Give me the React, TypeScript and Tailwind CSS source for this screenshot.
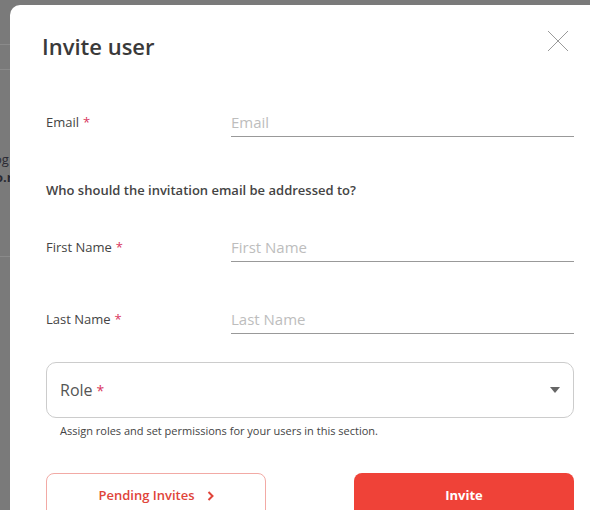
import React from "react";

function Req() {
  return <span className="ml-1 text-[#d9365e]">*</span>;
}

function Field({ label, placeholder }: { label: string; placeholder: string }) {
  return (
    <div className="flex items-center">
      <label className="w-[185px] shrink-0 text-[13px] leading-[20px] text-[#444]">
        {label}
        <Req />
      </label>
      <input
        type="text"
        placeholder={placeholder}
        className="h-[30px] flex-1 border-b border-[#999] bg-transparent text-[15px] text-[#444] placeholder-[#bdbdbd] outline-none"
      />
    </div>
  );
}

export default function App() {
  return (
    <div
      className="relative h-[510px] w-[590px] overflow-hidden bg-[#7a7a7a]"
      style={{ fontFamily: '"Open Sans", "Noto Sans", sans-serif' }}
    >
      {/* page behind the overlay */}
      <div className="flex flex-col">
        <div className="h-[45px] border-b border-[#8a8a8a]" />
        <div className="h-[25px] border-b border-[#8a8a8a]" />
        <div className="mt-[80px] -ml-[6px] text-[13px] leading-[18px] text-[#2a2a33]">og</div>
        <div className="-ml-[5px] text-[13px] font-bold leading-[18px] text-[#2a2a33]">o.r</div>
        <div className="mt-[70px] border-b border-[#8a8a8a]" />
      </div>

      {/* modal */}
      <div className="absolute left-[10px] top-[5px] w-[600px] rounded-tl-[10px] bg-white pl-[36px] pr-[36px] pt-[26px] pb-[40px]">
        <div className="flex items-start justify-between">
          <h2 className="-ml-[4px] text-[22px] font-semibold leading-[30px] text-[#3a3a3a]">Invite user</h2>
          <button className="mt-[-1px] mr-[5px] h-[22px] w-[22px]">
            <svg viewBox="0 0 22 22" width="22" height="22">
              <path d="M1 1 L21 21 M21 1 L1 21" stroke="#9a9a9a" strokeWidth="1" fill="none" />
            </svg>
          </button>
        </div>

        <div className="mt-[46px]">
          <Field label="Email" placeholder="Email" />
        </div>

        <p className="mt-[43px] text-[13px] font-semibold leading-[20px] text-[#444]">
          Who should the invitation email be addressed to?
        </p>

        <div className="mt-[32px]">
          <Field label="First Name" placeholder="First Name" />
        </div>
        <div className="mt-[42px]">
          <Field label="Last Name" placeholder="Last Name" />
        </div>

        <div className="mt-[28px] flex h-[56px] items-center justify-between rounded-[10px] border border-[#cccccc] pl-[13px] pr-[13px]">
          <span className="text-[16px] text-[#555]">
            Role
            <span className="ml-1 text-[14px] text-[#d9365e]">*</span>
          </span>
          <svg width="10" height="6" viewBox="0 0 10 6">
            <path d="M0 0 H10 L5 6 Z" fill="#666" />
          </svg>
        </div>
        <p className="mt-[5px] pl-[14px] text-[11px] leading-[16px] text-[#444]">
          Assign roles and set permissions for your users in this section.
        </p>

        <div className="mt-[34px] flex justify-between">
          <button className="flex h-[46px] w-[220px] items-center justify-center gap-[12px] rounded-[8px] border border-[#f2aaa5] text-[13px] font-semibold text-[#e0443a]">
            Pending Invites
            <svg width="7" height="10" viewBox="0 0 7 10">
              <path d="M1.5 1 L5.5 5 L1.5 9" stroke="#e0443a" strokeWidth="2" fill="none" />
            </svg>
          </button>
          <button className="h-[46px] w-[220px] rounded-[8px] bg-[#ef4238] text-[13px] font-bold text-white">
            Invite
          </button>
        </div>
      </div>
    </div>
  );
}
